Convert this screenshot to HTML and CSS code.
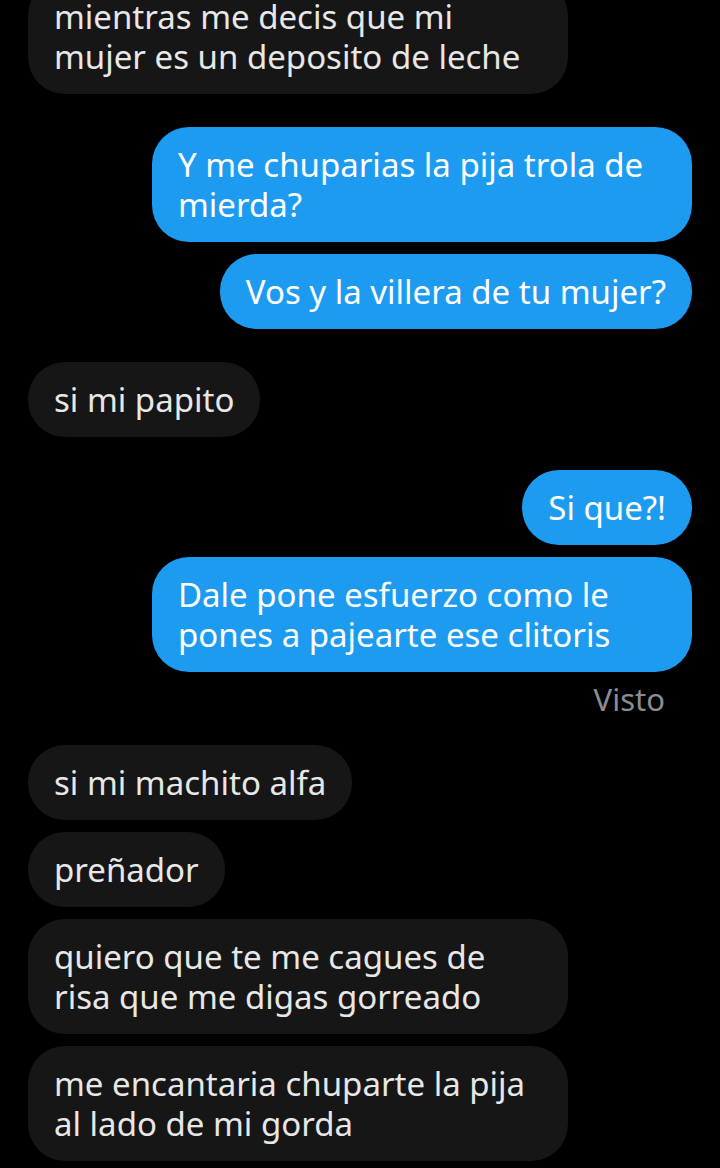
FILE: index.html
```html
<!DOCTYPE html>
<html lang="es">
<head>
    <meta charset="UTF-8">
    <meta name="viewport" content="width=device-width, initial-scale=1.0">
    <title>Mensajes</title>
    <link rel="stylesheet" href="styles.css">
</head>
<body>
    <div class="thread">
        <div class="msg in wide top">mientras me decis que mi<br>mujer es un deposito de leche</div>

        <div class="msg out wide first">Y me chuparias la pija trola de<br>mierda?</div>
        <div class="msg out">Vos y la villera de tu mujer?</div>

        <div class="msg in first">si mi papito</div>

        <div class="msg out first">Si que?!</div>
        <div class="msg out wide">Dale pone esfuerzo como le<br>pones a pajearte ese clitoris</div>
        <div class="seen">Visto</div>

        <div class="msg in first">si mi machito alfa</div>
        <div class="msg in">preñador</div>
        <div class="msg in wide">quiero que te me cagues de<br>risa que me digas gorreado</div>
        <div class="msg in wide">me encantaria chuparte la pija<br>al lado de mi gorda</div>
    </div>
</body>
</html>
```

FILE: styles.css
```css
body {
    margin: 0;
    background-color: #000;
    font-family: "Noto Sans", Roboto, sans-serif;
    overflow: hidden;
}
.thread {
    display: flex;
    flex-direction: column;
    gap: 12px;
    padding: 0 28px;
}
.msg {
    max-width: 540px;
    box-sizing: border-box;
    padding: 18px 26px 17px;
    border-radius: 37px;
    font-size: 33px;
    line-height: 40px;
    white-space: nowrap;
}
.msg.wide {
    width: 540px;
}
.msg.in {
    align-self: flex-start;
    background-color: #161616;
    color: #e7e7e7;
}
.msg.out {
    align-self: flex-end;
    background-color: #1d9bf0;
    color: #fff;
}
.msg.top {
    margin-top: -21px;
}
.msg.first {
    margin-top: 21px;
}
.seen {
    align-self: flex-end;
    padding-right: 27px;
    margin-bottom: -2px;
    font-size: 31px;
    line-height: 30px;
    color: #8a8d91;
}
```
